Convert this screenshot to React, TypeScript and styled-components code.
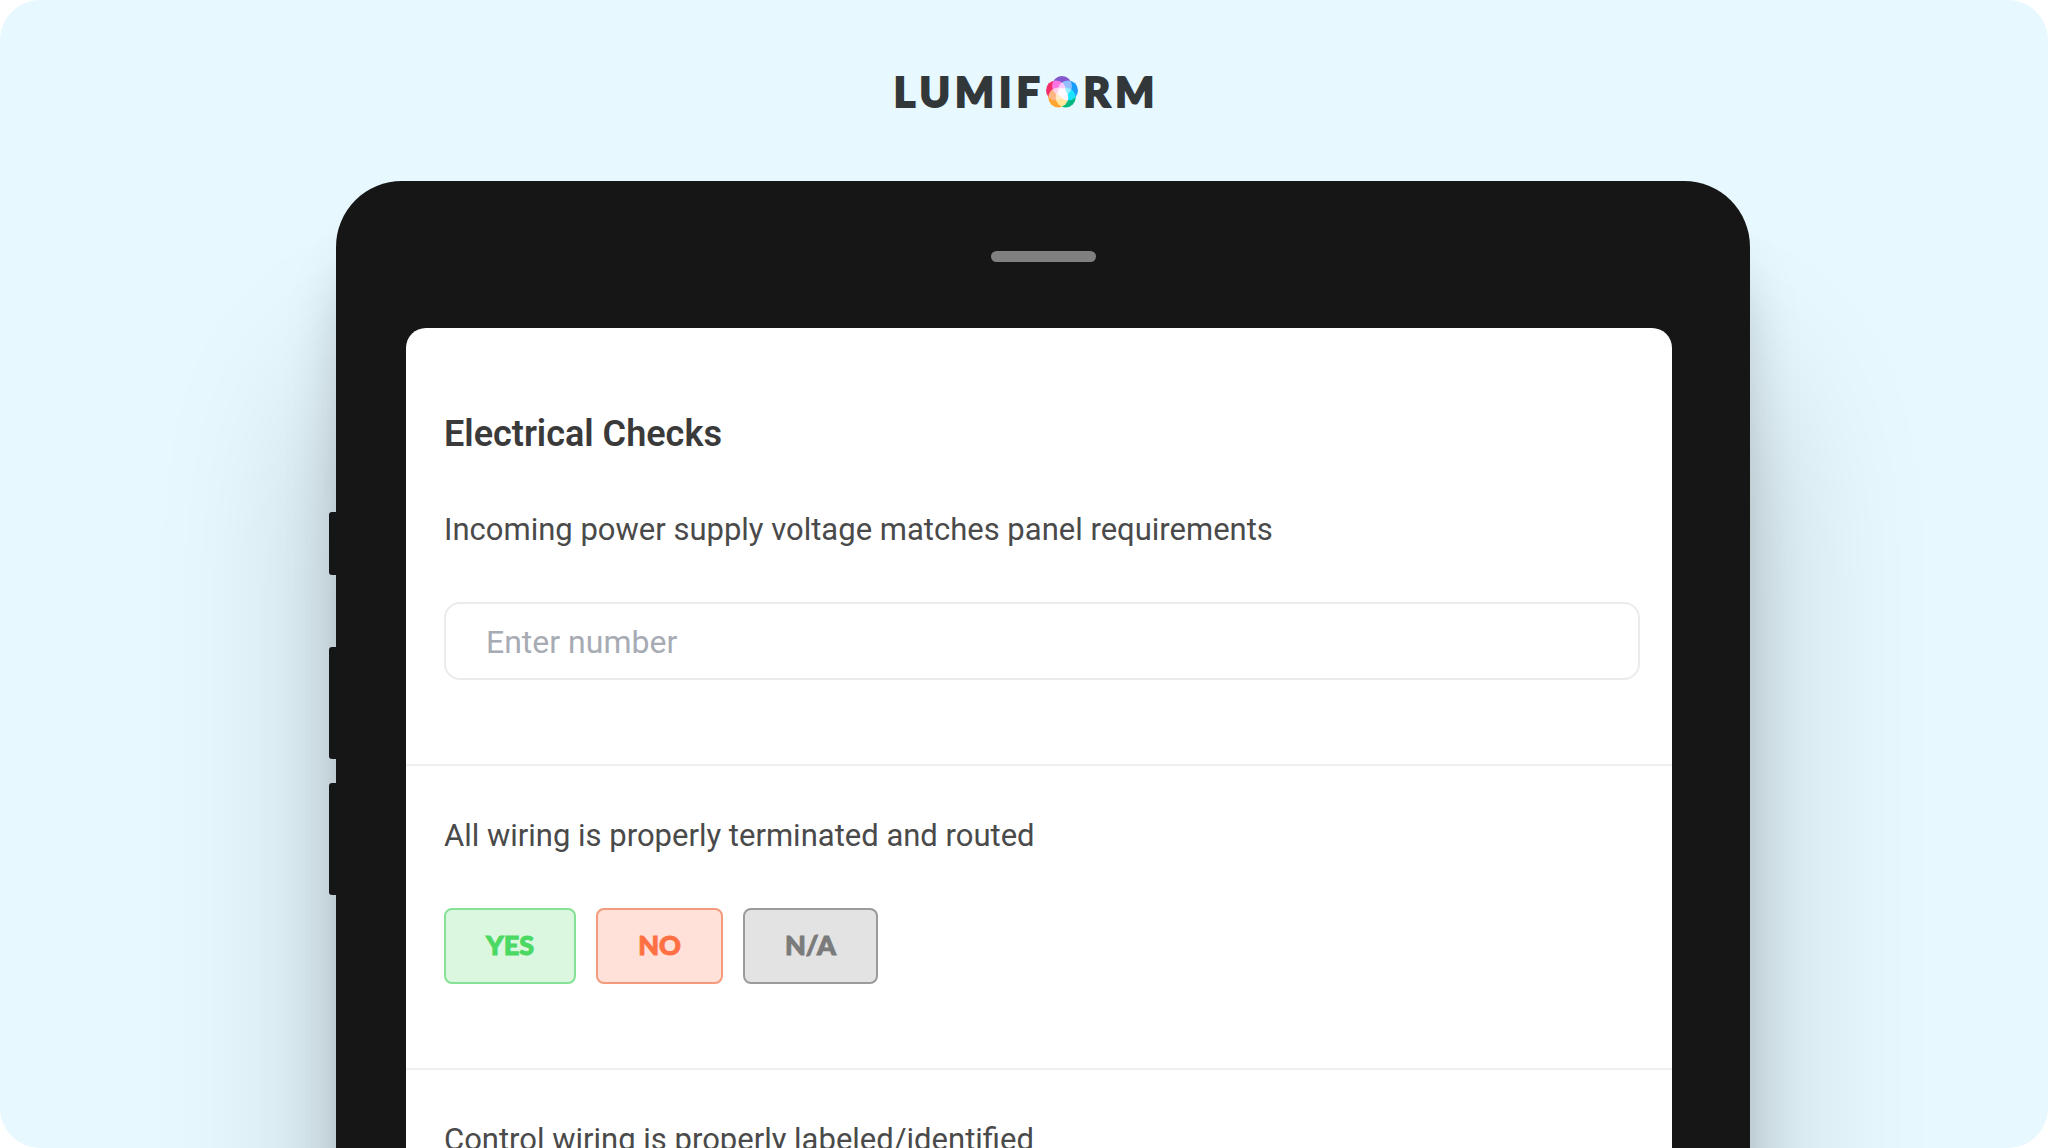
import React from "react";
import styled, { createGlobalStyle } from "styled-components";

const GlobalStyle = createGlobalStyle`
  *, *::before, *::after { box-sizing: border-box; }
  body {
    margin: 0;
    background: #ffffff;
    font-family: Roboto, "Open Sans", sans-serif;
  }
`;

const Stage = styled.main`
  display: flex;
  flex-direction: column;
  height: 100vh;
  overflow: hidden;
  border-radius: 40px;
  background: #e7f8ff;
`;

const Header = styled.header`
  display: flex;
  justify-content: center;
  align-items: center;
  padding: 68px 0 65px;
`;

const Brand = styled.h1`
  display: flex;
  align-items: center;
  gap: 6px;
  margin: 0;
  color: #32373a;
  font: 900 41px/48px "Lato Black", Lato, sans-serif;
  -webkit-text-stroke: 2px #32373a;
`;

const BrandPart = styled.span`
  letter-spacing: 5px;
  margin-right: -5px;
`;

const Flower = styled.svg`
  width: 32px;
  height: 34px;
  isolation: isolate;

  circle {
    mix-blend-mode: screen;
  }
`;

const DeviceRow = styled.div`
  display: flex;
  flex: 1;
  min-height: 0;
  padding: 0 298px 0 329px;
`;

const SideKeys = styled.div`
  display: flex;
  flex-direction: column;
  width: 7px;
  padding-top: 331px;
  z-index: 1;
`;

const SideKey = styled.span<{ $height: number; $gap: number }>`
  height: ${(p) => p.$height}px;
  margin-bottom: ${(p) => p.$gap}px;
  flex-shrink: 0;
  border-radius: 3px 0 0 3px;
  background: #141617;
`;

const Device = styled.div`
  display: flex;
  flex: 1;
  flex-direction: column;
  min-width: 0;
  height: 1600px;
  padding-top: 70px;
  border-radius: 66px;
  background: #161616;
  box-shadow:
    0 70px 60px -10px rgba(0, 0, 0, 0.22),
    0 200px 180px rgba(0, 0, 0, 0.2);
`;

const Speaker = styled.span`
  align-self: center;
  width: 105px;
  height: 11px;
  margin-bottom: 66px;
  flex-shrink: 0;
  border-radius: 6px;
  background: #808080;
`;

const Screen = styled.form`
  flex: 1;
  margin: 0 78px 0 70px;
  overflow: hidden;
  border-radius: 20px;
  background: #ffffff;
`;

const Section = styled.section`
  padding: 50px 32px 84px 38px;

  & + & {
    border-top: 2px solid #f0f0f0;
  }

  &:first-child {
    padding-top: 82px;
  }
`;

const Title = styled.h2`
  margin: 0 0 52px;
  color: #3a3a3a;
  font-size: 36px;
  font-weight: 600;
  line-height: 48px;
`;

const Question = styled.label`
  display: block;
  margin: 0 0 52px;
  color: #4a4a4a;
  font-size: 31px;
  line-height: 40px;
`;

const NumberField = styled.input`
  display: block;
  width: 100%;
  height: 78px;
  padding: 2px 40px 0;
  border: 2px solid #ebebeb;
  border-radius: 16px;
  background: #ffffff;
  color: #4a4a4a;
  font: inherit;
  font-size: 32px;

  &::placeholder {
    color: #a7abb3;
    opacity: 1;
  }
`;

const Answers = styled.div`
  display: flex;
  gap: 20px;
`;

const tones = {
  yes: { text: "#4bd964", border: "#84e296", fill: "#dcf7df" },
  no: { text: "#ff7043", border: "#f59a7c", fill: "#ffe1da" },
  na: { text: "#7b7b7b", border: "#9b9b9b", fill: "#e3e3e3" },
};

const Answer = styled.button<{ $tone: keyof typeof tones }>`
  height: 76px;
  padding: 0 40px 3px;
  border: 2px solid ${(p) => tones[p.$tone].border};
  border-radius: 8px;
  background: ${(p) => tones[p.$tone].fill};
  color: ${(p) => tones[p.$tone].text};
  font: 900 27px/36px "Lato Black", Lato, sans-serif;
  -webkit-text-stroke: 1px ${(p) => tones[p.$tone].text};
`;

export default function App() {
  return (
    <>
      <GlobalStyle />
      <Stage>
        <Header>
          <Brand>
            <BrandPart>LUMIF</BrandPart>
            <Flower viewBox="0 0 32 34" aria-hidden="true">
              <circle cx="16" cy="11" r="10" fill="#8458cc" />
              <circle cx="22" cy="15.4" r="10" fill="#1a9cff" />
              <circle cx="19.7" cy="22.5" r="10" fill="#00b880" />
              <circle cx="12.3" cy="22.5" r="10" fill="#ffa530" />
              <circle cx="10" cy="15.4" r="10" fill="#f52d68" />
            </Flower>
            <BrandPart>RM</BrandPart>
          </Brand>
        </Header>
        <DeviceRow>
          <SideKeys>
            <SideKey $height={63} $gap={72} />
            <SideKey $height={112} $gap={24} />
            <SideKey $height={112} $gap={0} />
          </SideKeys>
          <Device>
            <Speaker />
            <Screen>
              <Section>
                <Title>Electrical Checks</Title>
                <Question htmlFor="voltage">
                  Incoming power supply voltage matches panel requirements
                </Question>
                <NumberField id="voltage" inputMode="numeric" placeholder="Enter number" />
              </Section>
              <Section>
                <Question as="p" id="wiring">
                  All wiring is properly terminated and routed
                </Question>
                <Answers role="group" aria-labelledby="wiring">
                  <Answer type="button" $tone="yes">YES</Answer>
                  <Answer type="button" $tone="no">NO</Answer>
                  <Answer type="button" $tone="na">N/A</Answer>
                </Answers>
              </Section>
              <Section>
                <Question as="p">Control wiring is properly labeled/identified</Question>
              </Section>
            </Screen>
          </Device>
        </DeviceRow>
      </Stage>
    </>
  );
}
